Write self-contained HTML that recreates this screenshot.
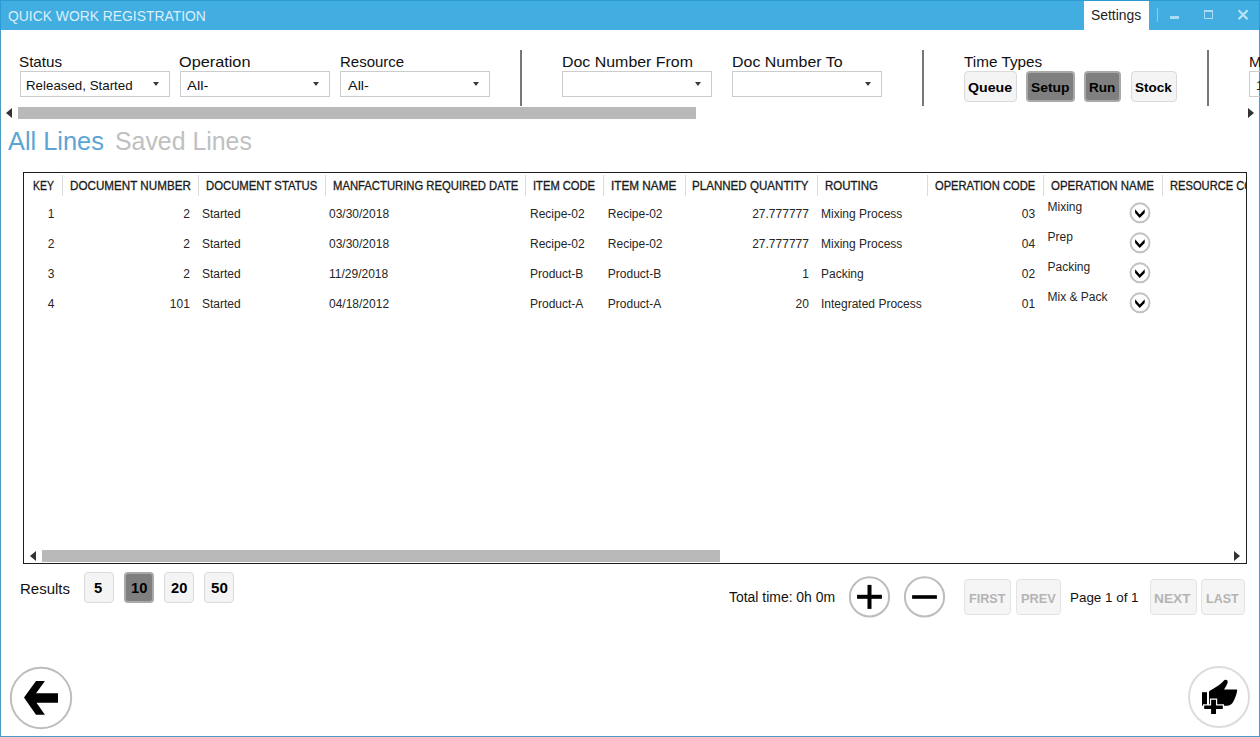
<!DOCTYPE html>
<html><head><meta charset="utf-8"><style>
*{margin:0;padding:0;box-sizing:border-box;}
html,body{width:1260px;height:737px;overflow:hidden;background:#fff;}
body{font-family:"Liberation Sans",sans-serif;color:#111;position:relative;}
.a{position:absolute;white-space:nowrap;}
.arr{position:absolute;width:0;height:0;border-left:3.5px solid transparent;border-right:3.5px solid transparent;border-top:4px solid #3a3a3a;}
.btn{position:absolute;border:1px solid #dadada;background:#f4f4f4;border-radius:4px;}
.btn.on{background:#7f7f7f;border:2px solid #a9a9a9;}
</style></head><body>
<div class="a" style="left:0px;top:0px;width:1260px;height:30px;background:#42ade1;"></div>
<div class="a" style="left:0px;top:0px;width:1260px;height:1px;background:#2d9ad2;"></div>
<div class="a" style="left:7.50px;top:8.30px;font-size:15px;line-height:15px;color:#dbeffa;font-weight:normal;transform:scaleX(0.9249);transform-origin:0 0;">QUICK WORK REGISTRATION</div>
<div class="a" style="left:1084px;top:1px;width:65px;height:29px;background:#fff;"></div>
<div class="a" style="left:1091.00px;top:8.15px;font-size:14px;line-height:14px;color:#1e1e1e;font-weight:normal;transform:scaleX(0.9898);transform-origin:0 0;">Settings</div>
<div class="a" style="left:1157px;top:8px;width:1px;height:14px;background:#8bcdee;"></div>
<div class="a" style="left:1170px;top:16px;width:9px;height:3px;background:#a9dcf4;"></div>
<div class="a" style="left:1204px;top:10px;width:9px;height:9px;border:1px solid #a9dcf4;border-top-width:2px;"></div>
<svg class="a" style="left:1237px;top:9px;" width="12" height="12" viewBox="0 0 12 12"><path d="M1.6 1.3L10.6 10.3M10.6 1.3L1.6 10.3" stroke="#b9e3f7" stroke-width="2.3"/></svg>
<div class="a" style="left:0px;top:0px;width:1px;height:30px;background:#2d9ad6;"></div>
<div class="a" style="left:1259px;top:0px;width:1px;height:30px;background:#2d9ad6;"></div>
<div class="a" style="left:0px;top:30px;width:1px;height:707px;background:#4a9cc4;"></div>
<div class="a" style="left:1259px;top:30px;width:1px;height:707px;background:#4a9cc4;"></div>
<div class="a" style="left:0px;top:736px;width:1260px;height:1px;background:#4a9cc4;"></div>
<div class="a" style="left:19.20px;top:54.20px;font-size:15px;line-height:15px;color:#111;font-weight:normal;transform:scaleX(1.0124);transform-origin:0 0;">Status</div>
<div class="a" style="left:20px;top:71px;width:150px;height:26px;border:1px solid #cccccc;background:#fff;"></div>
<div class="a" style="left:26.40px;top:79.00px;font-size:13px;line-height:13px;color:#111;font-weight:normal;transform:scaleX(1.0245);transform-origin:0 0;">Released, Started</div>
<div class="arr" style="left:153px;top:82px;"></div>
<div class="a" style="left:179.20px;top:54.20px;font-size:15px;line-height:15px;color:#111;font-weight:normal;transform:scaleX(1.0848);transform-origin:0 0;">Operation</div>
<div class="a" style="left:180px;top:71px;width:150px;height:26px;border:1px solid #cccccc;background:#fff;"></div>
<div class="a" style="left:187.40px;top:79.00px;font-size:13px;line-height:13px;color:#111;font-weight:normal;transform:scaleX(1.1402);transform-origin:0 0;">All-</div>
<div class="arr" style="left:313px;top:82px;"></div>
<div class="a" style="left:340.20px;top:54.20px;font-size:15px;line-height:15px;color:#111;font-weight:normal;transform:scaleX(1.0002);transform-origin:0 0;">Resource</div>
<div class="a" style="left:340px;top:71px;width:150px;height:26px;border:1px solid #cccccc;background:#fff;"></div>
<div class="a" style="left:347.90px;top:79.00px;font-size:13px;line-height:13px;color:#111;font-weight:normal;transform:scaleX(1.1122);transform-origin:0 0;">All-</div>
<div class="arr" style="left:473px;top:82px;"></div>
<div class="a" style="left:520px;top:50px;width:2px;height:56px;background:#777777;"></div>
<div class="a" style="left:562.20px;top:54.20px;font-size:15px;line-height:15px;color:#111;font-weight:normal;transform:scaleX(1.0620);transform-origin:0 0;">Doc Number From</div>
<div class="a" style="left:562px;top:71px;width:150px;height:26px;border:1px solid #cccccc;background:#fff;"></div>
<div class="arr" style="left:695px;top:82px;"></div>
<div class="a" style="left:731.70px;top:54.20px;font-size:15px;line-height:15px;color:#111;font-weight:normal;transform:scaleX(1.0638);transform-origin:0 0;">Doc Number To</div>
<div class="a" style="left:732px;top:71px;width:150px;height:26px;border:1px solid #cccccc;background:#fff;"></div>
<div class="arr" style="left:865px;top:82px;"></div>
<div class="a" style="left:922px;top:50px;width:2px;height:56px;background:#777777;"></div>
<div class="a" style="left:964.20px;top:54.40px;font-size:15px;line-height:15px;color:#111;font-weight:normal;transform:scaleX(1.0198);transform-origin:0 0;">Time Types</div>
<div class="btn" style="left:964px;top:71px;width:53px;height:31px;"></div>
<div class="a" style="left:967.80px;top:80.57px;font-size:13.5px;line-height:13.5px;color:#000;font-weight:bold;transform:scaleX(1.0491);transform-origin:0 0;">Queue</div>
<div class="btn on" style="left:1026px;top:71px;width:49px;height:31px;"></div>
<div class="a" style="left:1030.60px;top:80.57px;font-size:13.5px;line-height:13.5px;color:#000;font-weight:bold;transform:scaleX(1.0281);transform-origin:0 0;">Setup</div>
<div class="btn on" style="left:1084px;top:71px;width:37px;height:31px;"></div>
<div class="a" style="left:1089.20px;top:80.57px;font-size:13.5px;line-height:13.5px;color:#000;font-weight:bold;transform:scaleX(1.0007);transform-origin:0 0;">Run</div>
<div class="btn" style="left:1131px;top:71px;width:46px;height:31px;"></div>
<div class="a" style="left:1135.00px;top:80.57px;font-size:13.5px;line-height:13.5px;color:#000;font-weight:bold;">Stock</div>
<div class="a" style="left:1207px;top:50px;width:2px;height:56px;background:#777777;"></div>
<div class="a" style="left:1249.00px;top:54.20px;font-size:15px;line-height:15px;color:#111;font-weight:normal;">M</div>
<div class="a" style="left:1249px;top:71px;width:20px;height:26px;border:1px solid #cccccc;"></div>
<div class="a" style="left:1256.00px;top:79.00px;font-size:13px;line-height:13px;color:#222;font-weight:normal;">1</div>
<div class="a" style="left:6px;top:108px;width:0;height:0;border-top:5px solid transparent;border-bottom:5px solid transparent;border-right:6px solid #333;"></div>
<div class="a" style="left:18px;top:107px;width:678px;height:12px;background:#b9b9b9;"></div>
<div class="a" style="left:1248px;top:108px;width:0;height:0;border-top:5px solid transparent;border-bottom:5px solid transparent;border-left:6px solid #333;"></div>
<div class="a" style="left:7.50px;top:129.41px;font-size:25.5px;line-height:25.5px;color:#5ba5d6;font-weight:normal;transform:scaleX(0.9949);transform-origin:0 0;">All Lines</div>
<div class="a" style="left:114.50px;top:129.41px;font-size:25.5px;line-height:25.5px;color:#c0c0c0;font-weight:normal;transform:scaleX(0.9748);transform-origin:0 0;">Saved Lines</div>
<div class="a" style="left:23px;top:172px;width:1224px;height:392px;border:1px solid #1e1e1e;"></div>
<div class="a" style="left:24px;top:173px;width:1222px;height:390px;overflow:hidden;"><div class="a" style="left:-24px;top:-173px;width:1260px;height:737px;">
<div class="a" style="left:62px;top:175px;width:1px;height:21px;background:#dcdcdc;"></div>
<div class="a" style="left:198px;top:175px;width:1px;height:21px;background:#dcdcdc;"></div>
<div class="a" style="left:325px;top:175px;width:1px;height:21px;background:#dcdcdc;"></div>
<div class="a" style="left:525px;top:175px;width:1px;height:21px;background:#dcdcdc;"></div>
<div class="a" style="left:603px;top:175px;width:1px;height:21px;background:#dcdcdc;"></div>
<div class="a" style="left:685px;top:175px;width:1px;height:21px;background:#dcdcdc;"></div>
<div class="a" style="left:817px;top:175px;width:1px;height:21px;background:#dcdcdc;"></div>
<div class="a" style="left:927px;top:175px;width:1px;height:21px;background:#dcdcdc;"></div>
<div class="a" style="left:1043px;top:175px;width:1px;height:21px;background:#dcdcdc;"></div>
<div class="a" style="left:1162px;top:175px;width:1px;height:21px;background:#dcdcdc;"></div>
<div class="a" style="left:33.30px;top:179.84px;font-size:12px;line-height:12px;color:#1a1a1a;font-weight:normal;-webkit-text-stroke:0.3px #1a1a1a;transform:scaleX(0.8686);transform-origin:0 0;">KEY</div>
<div class="a" style="left:69.70px;top:179.84px;font-size:12px;line-height:12px;color:#1a1a1a;font-weight:normal;-webkit-text-stroke:0.3px #1a1a1a;transform:scaleX(0.9711);transform-origin:0 0;">DOCUMENT NUMBER</div>
<div class="a" style="left:205.70px;top:179.84px;font-size:12px;line-height:12px;color:#1a1a1a;font-weight:normal;-webkit-text-stroke:0.3px #1a1a1a;transform:scaleX(0.9434);transform-origin:0 0;">DOCUMENT STATUS</div>
<div class="a" style="left:332.50px;top:179.84px;font-size:12px;line-height:12px;color:#1a1a1a;font-weight:normal;-webkit-text-stroke:0.3px #1a1a1a;transform:scaleX(0.9400);transform-origin:0 0;">MANFACTURING REQUIRED DATE</div>
<div class="a" style="left:533.00px;top:179.84px;font-size:12px;line-height:12px;color:#1a1a1a;font-weight:normal;-webkit-text-stroke:0.3px #1a1a1a;transform:scaleX(0.9309);transform-origin:0 0;">ITEM CODE</div>
<div class="a" style="left:611.20px;top:179.84px;font-size:12px;line-height:12px;color:#1a1a1a;font-weight:normal;-webkit-text-stroke:0.3px #1a1a1a;transform:scaleX(0.9794);transform-origin:0 0;">ITEM NAME</div>
<div class="a" style="left:692.30px;top:179.84px;font-size:12px;line-height:12px;color:#1a1a1a;font-weight:normal;-webkit-text-stroke:0.3px #1a1a1a;transform:scaleX(0.9652);transform-origin:0 0;">PLANNED QUANTITY</div>
<div class="a" style="left:824.50px;top:179.84px;font-size:12px;line-height:12px;color:#1a1a1a;font-weight:normal;-webkit-text-stroke:0.3px #1a1a1a;transform:scaleX(0.9589);transform-origin:0 0;">ROUTING</div>
<div class="a" style="left:934.60px;top:179.84px;font-size:12px;line-height:12px;color:#1a1a1a;font-weight:normal;-webkit-text-stroke:0.3px #1a1a1a;transform:scaleX(0.9288);transform-origin:0 0;">OPERATION CODE</div>
<div class="a" style="left:1050.70px;top:179.84px;font-size:12px;line-height:12px;color:#1a1a1a;font-weight:normal;-webkit-text-stroke:0.3px #1a1a1a;transform:scaleX(0.9549);transform-origin:0 0;">OPERATION NAME</div>
<div class="a" style="left:1170.10px;top:179.84px;font-size:12px;line-height:12px;color:#1a1a1a;font-weight:normal;-webkit-text-stroke:0.3px #1a1a1a;transform:scaleX(0.9288);transform-origin:0 0;">RESOURCE CODE</div>
<div class="a" style="right:1205.70px;top:207.94px;font-size:12px;line-height:12px;color:#262626;font-weight:normal;text-align:right;">1</div>
<div class="a" style="right:1070.20px;top:207.94px;font-size:12px;line-height:12px;color:#262626;font-weight:normal;text-align:right;">2</div>
<div class="a" style="left:202.00px;top:207.94px;font-size:12px;line-height:12px;color:#262626;font-weight:normal;">Started</div>
<div class="a" style="left:329.00px;top:207.94px;font-size:12px;line-height:12px;color:#262626;font-weight:normal;">03/30/2018</div>
<div class="a" style="left:530.00px;top:207.94px;font-size:12px;line-height:12px;color:#262626;font-weight:normal;">Recipe-02</div>
<div class="a" style="left:607.80px;top:207.94px;font-size:12px;line-height:12px;color:#262626;font-weight:normal;">Recipe-02</div>
<div class="a" style="right:451.10px;top:207.94px;font-size:12px;line-height:12px;color:#262626;font-weight:normal;text-align:right;">27.777777</div>
<div class="a" style="left:821.00px;top:207.94px;font-size:12px;line-height:12px;color:#262626;font-weight:normal;">Mixing Process</div>
<div class="a" style="right:224.80px;top:207.94px;font-size:12px;line-height:12px;color:#262626;font-weight:normal;text-align:right;">03</div>
<div class="a" style="left:1047.50px;top:200.64px;font-size:12px;line-height:12px;color:#262626;font-weight:normal;">Mixing</div>
<svg class="a" style="left:1128px;top:201px;" width="24" height="24" viewBox="0 0 24 24"><circle cx="12" cy="11.8" r="9.5" fill="#fff" stroke="#c2c2c2" stroke-width="1.9"/><path d="M7.1 8.2L7.1 11.9L11.7 17.1L16.7 11.9L16.7 8.2L11.7 13.6Z" fill="#000"/></svg>
<div class="a" style="right:1205.70px;top:237.94px;font-size:12px;line-height:12px;color:#262626;font-weight:normal;text-align:right;">2</div>
<div class="a" style="right:1070.20px;top:237.94px;font-size:12px;line-height:12px;color:#262626;font-weight:normal;text-align:right;">2</div>
<div class="a" style="left:202.00px;top:237.94px;font-size:12px;line-height:12px;color:#262626;font-weight:normal;">Started</div>
<div class="a" style="left:329.00px;top:237.94px;font-size:12px;line-height:12px;color:#262626;font-weight:normal;">03/30/2018</div>
<div class="a" style="left:530.00px;top:237.94px;font-size:12px;line-height:12px;color:#262626;font-weight:normal;">Recipe-02</div>
<div class="a" style="left:607.80px;top:237.94px;font-size:12px;line-height:12px;color:#262626;font-weight:normal;">Recipe-02</div>
<div class="a" style="right:451.10px;top:237.94px;font-size:12px;line-height:12px;color:#262626;font-weight:normal;text-align:right;">27.777777</div>
<div class="a" style="left:821.00px;top:237.94px;font-size:12px;line-height:12px;color:#262626;font-weight:normal;">Mixing Process</div>
<div class="a" style="right:224.80px;top:237.94px;font-size:12px;line-height:12px;color:#262626;font-weight:normal;text-align:right;">04</div>
<div class="a" style="left:1047.50px;top:230.64px;font-size:12px;line-height:12px;color:#262626;font-weight:normal;">Prep</div>
<svg class="a" style="left:1128px;top:231px;" width="24" height="24" viewBox="0 0 24 24"><circle cx="12" cy="11.8" r="9.5" fill="#fff" stroke="#c2c2c2" stroke-width="1.9"/><path d="M7.1 8.2L7.1 11.9L11.7 17.1L16.7 11.9L16.7 8.2L11.7 13.6Z" fill="#000"/></svg>
<div class="a" style="right:1205.70px;top:267.94px;font-size:12px;line-height:12px;color:#262626;font-weight:normal;text-align:right;">3</div>
<div class="a" style="right:1070.20px;top:267.94px;font-size:12px;line-height:12px;color:#262626;font-weight:normal;text-align:right;">2</div>
<div class="a" style="left:202.00px;top:267.94px;font-size:12px;line-height:12px;color:#262626;font-weight:normal;">Started</div>
<div class="a" style="left:329.00px;top:267.94px;font-size:12px;line-height:12px;color:#262626;font-weight:normal;">11/29/2018</div>
<div class="a" style="left:530.00px;top:267.94px;font-size:12px;line-height:12px;color:#262626;font-weight:normal;">Product-B</div>
<div class="a" style="left:607.80px;top:267.94px;font-size:12px;line-height:12px;color:#262626;font-weight:normal;">Product-B</div>
<div class="a" style="right:451.10px;top:267.94px;font-size:12px;line-height:12px;color:#262626;font-weight:normal;text-align:right;">1</div>
<div class="a" style="left:821.00px;top:267.94px;font-size:12px;line-height:12px;color:#262626;font-weight:normal;">Packing</div>
<div class="a" style="right:224.80px;top:267.94px;font-size:12px;line-height:12px;color:#262626;font-weight:normal;text-align:right;">02</div>
<div class="a" style="left:1047.50px;top:260.64px;font-size:12px;line-height:12px;color:#262626;font-weight:normal;">Packing</div>
<svg class="a" style="left:1128px;top:261px;" width="24" height="24" viewBox="0 0 24 24"><circle cx="12" cy="11.8" r="9.5" fill="#fff" stroke="#c2c2c2" stroke-width="1.9"/><path d="M7.1 8.2L7.1 11.9L11.7 17.1L16.7 11.9L16.7 8.2L11.7 13.6Z" fill="#000"/></svg>
<div class="a" style="right:1205.70px;top:297.94px;font-size:12px;line-height:12px;color:#262626;font-weight:normal;text-align:right;">4</div>
<div class="a" style="right:1070.20px;top:297.94px;font-size:12px;line-height:12px;color:#262626;font-weight:normal;text-align:right;">101</div>
<div class="a" style="left:202.00px;top:297.94px;font-size:12px;line-height:12px;color:#262626;font-weight:normal;">Started</div>
<div class="a" style="left:329.00px;top:297.94px;font-size:12px;line-height:12px;color:#262626;font-weight:normal;">04/18/2012</div>
<div class="a" style="left:530.00px;top:297.94px;font-size:12px;line-height:12px;color:#262626;font-weight:normal;">Product-A</div>
<div class="a" style="left:607.80px;top:297.94px;font-size:12px;line-height:12px;color:#262626;font-weight:normal;">Product-A</div>
<div class="a" style="right:451.10px;top:297.94px;font-size:12px;line-height:12px;color:#262626;font-weight:normal;text-align:right;">20</div>
<div class="a" style="left:821.00px;top:297.94px;font-size:12px;line-height:12px;color:#262626;font-weight:normal;">Integrated Process</div>
<div class="a" style="right:224.80px;top:297.94px;font-size:12px;line-height:12px;color:#262626;font-weight:normal;text-align:right;">01</div>
<div class="a" style="left:1047.50px;top:290.64px;font-size:12px;line-height:12px;color:#262626;font-weight:normal;">Mix &amp; Pack</div>
<svg class="a" style="left:1128px;top:291px;" width="24" height="24" viewBox="0 0 24 24"><circle cx="12" cy="11.8" r="9.5" fill="#fff" stroke="#c2c2c2" stroke-width="1.9"/><path d="M7.1 8.2L7.1 11.9L11.7 17.1L16.7 11.9L16.7 8.2L11.7 13.6Z" fill="#000"/></svg>
<div class="a" style="left:30px;top:551px;width:0;height:0;border-top:5px solid transparent;border-bottom:5px solid transparent;border-right:6px solid #333;"></div>
<div class="a" style="left:42px;top:550px;width:678px;height:12px;background:#b9b9b9;"></div>
<div class="a" style="left:1234px;top:551px;width:0;height:0;border-top:5px solid transparent;border-bottom:5px solid transparent;border-left:6px solid #333;"></div>
</div></div>
<div class="a" style="left:20.00px;top:581.00px;font-size:15px;line-height:15px;color:#111;font-weight:normal;transform:scaleX(1.0002);transform-origin:0 0;">Results</div>
<div class="btn" style="left:84px;top:572px;width:30px;height:31px;"></div>
<div class="a" style="left:94.40px;top:580.53px;font-size:14.5px;line-height:14.5px;color:#000;font-weight:bold;transform:scaleX(1.0208);transform-origin:0 0;">5</div>
<div class="btn on" style="left:124px;top:572px;width:30px;height:31px;"></div>
<div class="a" style="left:131.20px;top:580.53px;font-size:14.5px;line-height:14.5px;color:#000;font-weight:bold;transform:scaleX(1.0125);transform-origin:0 0;">10</div>
<div class="btn" style="left:164px;top:572px;width:30px;height:31px;"></div>
<div class="a" style="left:171.20px;top:580.53px;font-size:14.5px;line-height:14.5px;color:#000;font-weight:bold;transform:scaleX(1.0109);transform-origin:0 0;">20</div>
<div class="btn" style="left:204px;top:572px;width:30px;height:31px;"></div>
<div class="a" style="left:210.80px;top:580.53px;font-size:14.5px;line-height:14.5px;color:#000;font-weight:bold;transform:scaleX(1.0442);transform-origin:0 0;">50</div>
<div class="a" style="left:728.60px;top:590.15px;font-size:14px;line-height:14px;color:#111;font-weight:normal;transform:scaleX(0.9953);transform-origin:0 0;">Total time: 0h 0m</div>
<svg class="a" style="left:848px;top:576px;" width="43" height="43" viewBox="0 0 43 43"><circle cx="21.5" cy="20.9" r="19.6" fill="#fff" stroke="#bdbdbd" stroke-width="2"/><rect x="9.1" y="18.8" width="24.8" height="4" fill="#000"/><rect x="19.5" y="8.9" width="4" height="24" fill="#000"/></svg>
<svg class="a" style="left:903px;top:576px;" width="43" height="43" viewBox="0 0 43 43"><circle cx="21.5" cy="20.9" r="19.6" fill="#fff" stroke="#bdbdbd" stroke-width="2"/><rect x="9.1" y="19.2" width="24.8" height="3.6" fill="#000"/></svg>
<div class="btn" style="left:964px;top:579px;width:47px;height:36px;border-color:#e3e3e3;background:#f5f5f5;"></div>
<div class="a" style="left:968.80px;top:591.87px;font-size:13.5px;line-height:13.5px;color:#b4b4b4;font-weight:bold;transform:scaleX(0.9345);transform-origin:0 0;">FIRST</div>
<div class="btn" style="left:1016px;top:579px;width:45px;height:36px;border-color:#e3e3e3;background:#f5f5f5;"></div>
<div class="a" style="left:1020.60px;top:591.87px;font-size:13.5px;line-height:13.5px;color:#b4b4b4;font-weight:bold;transform:scaleX(0.9450);transform-origin:0 0;">PREV</div>
<div class="a" style="left:1070.20px;top:591.17px;font-size:13.5px;line-height:13.5px;color:#111;font-weight:normal;transform:scaleX(0.9927);transform-origin:0 0;">Page 1 of 1</div>
<div class="btn" style="left:1150px;top:579px;width:47px;height:36px;border-color:#e3e3e3;background:#f5f5f5;"></div>
<div class="a" style="left:1154.20px;top:591.87px;font-size:13.5px;line-height:13.5px;color:#b4b4b4;font-weight:bold;transform:scaleX(1.0147);transform-origin:0 0;">NEXT</div>
<div class="btn" style="left:1201px;top:579px;width:44px;height:36px;border-color:#e3e3e3;background:#f5f5f5;"></div>
<div class="a" style="left:1206.40px;top:591.87px;font-size:13.5px;line-height:13.5px;color:#b4b4b4;font-weight:bold;transform:scaleX(0.9296);transform-origin:0 0;">LAST</div>
<svg class="a" style="left:9px;top:666px;" width="64" height="64" viewBox="0 0 64 64"><circle cx="32" cy="32" r="30.2" fill="#fff" stroke="#bdbdbd" stroke-width="2"/><path d="M35.9 14.9L27 14.9L15 31.6L27 48.8L35.9 48.8L27.5 36.8L49 36.8L49 27.2L27.1 27.2Z" fill="#000"/></svg>
<svg class="a" style="left:1187px;top:665px;" width="64" height="64" viewBox="0 0 64 64"><circle cx="32" cy="32" r="30" fill="#fff" stroke="#dcdcdc" stroke-width="2"/><rect x="15" y="27.2" width="5" height="13.5" fill="#000"/><path d="M22 26.5C26 23.5 33 20.5 36.5 16C38 14 41.5 14.5 40.5 18C39.5 21 38 23 37 24.5L50 24.5C50.5 25 49.5 30 48 33C46 38 44 40.7 40 40.7L22 40.7Z" fill="#000"/><path d="M22.9 33.5h7.3v5.7h6.8v6.1h-6.8v4.9h-7.3v-4.9h-6.9v-6.1h6.9z" fill="#fff"/><path d="M24.1 34.7h4.9v5.7h6.8v3.7h-6.8v5h-4.9v-5h-6.9v-3.7h6.9z" fill="#000"/></svg>
</body></html>
